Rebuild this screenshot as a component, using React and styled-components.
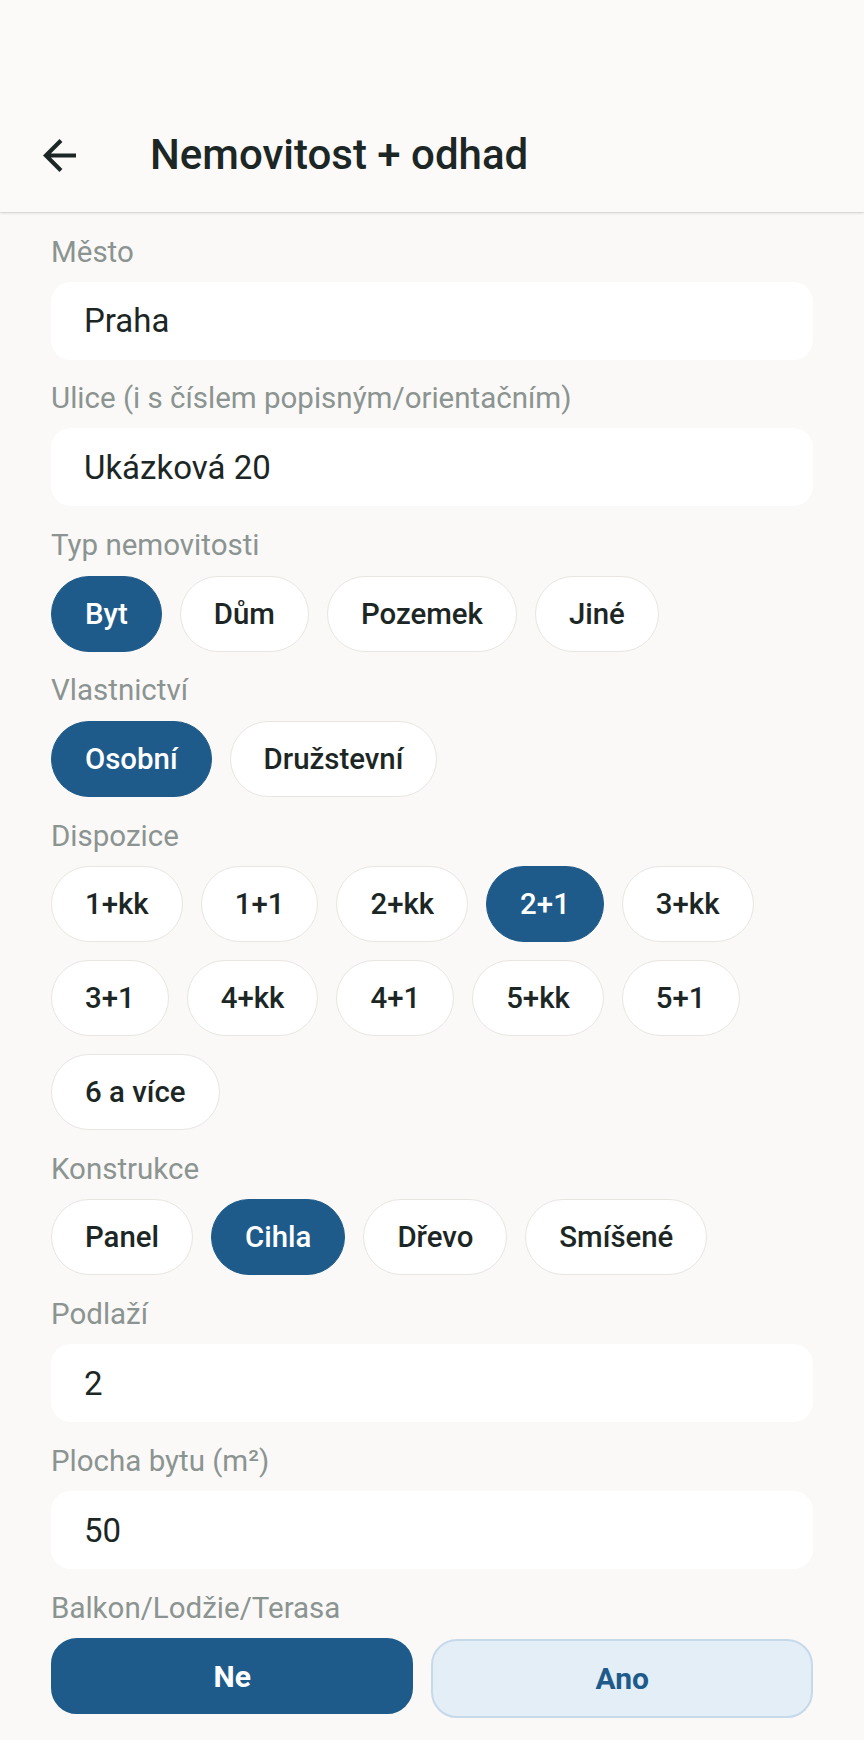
import React from "react";
import styled, { createGlobalStyle } from "styled-components";

const GlobalStyle = createGlobalStyle`
  html, body {
    margin: 0;
    padding: 0;
    background: #faf9f7;
  }
  body {
    font-family: Roboto, "Noto Sans", "Liberation Sans", sans-serif;
    color: #1c2725;
  }
`;

const Page = styled.div`
  min-height: 1740px;
  background: #faf9f7;
`;

const Header = styled.header`
  height: 212px;
  box-sizing: border-box;
  padding: 98px 0 0 43px;
  display: flex;
  align-items: center;
  background: #fbfaf8;
  box-shadow: 0 1px 3px rgba(0, 0, 0, 0.12), 0 1px 1px rgba(0, 0, 0, 0.05);
  position: relative;
  z-index: 1;
`;

const HeaderRow = styled.div`
  height: 114px;
  display: flex;
  align-items: center;
  gap: 74px;
`;

const BackButton = styled.button`
  border: 0;
  padding: 0;
  background: transparent;
  display: flex;
  color: #1c2725;
`;

const Title = styled.h1`
  margin: 0;
  font-size: 42px;
  font-weight: 500;
  line-height: 50px;
  color: #1c2725;
`;

const Content = styled.main`
  padding: 21.5px 51px 24px 51px;
  display: flex;
  flex-direction: column;
  gap: 20.8px;
`;

const Field = styled.section`
  display: flex;
  flex-direction: column;
  gap: ${(p) => (p.$chips ? "12.6px" : "12px")};
`;

const Label = styled.div`
  font-size: 29.5px;
  line-height: 36px;
  color: #8b9491;
`;

const InputBox = styled.div`
  height: 78px;
  border-radius: 20px;
  background: #ffffff;
  display: flex;
  align-items: center;
  padding-left: 33px;
  font-size: 33px;
  color: #1c2725;
`;

const ChipRow = styled.div`
  display: flex;
  flex-wrap: wrap;
  gap: 17.8px 18px;
`;

const Chip = styled.button`
  height: 76px;
  box-sizing: border-box;
  padding: 0 33px;
  border-radius: 38px;
  border: 1px solid ${(p) => (p.$active ? "#1e5b8b" : "#e9e6e1")};
  background: ${(p) => (p.$active ? "#1e5b8b" : "#ffffff")};
  color: ${(p) => (p.$active ? "#ffffff" : "#1c2725")};
  font-family: Roboto, sans-serif;
  font-size: 29.4px;
  font-weight: 500;
  display: flex;
  align-items: center;
`;

const ToggleRow = styled.div`
  display: flex;
  align-items: flex-start;
  gap: 18px;
`;

const Toggle = styled.button`
  flex: ${(p) => (p.$active ? 362 : 382)} 1 0;
  height: ${(p) => (p.$active ? "76px" : "79px")};
  margin-top: ${(p) => (p.$active ? "0" : "1px")};
  box-sizing: border-box;
  border-radius: 26px;
  border: 2px solid ${(p) => (p.$active ? "#1e5b8b" : "#c6d9ea")};
  background: ${(p) => (p.$active ? "#1e5b8b" : "#e3eef6")};
  color: ${(p) => (p.$active ? "#ffffff" : "#1e5b8b")};
  font-family: Roboto, sans-serif;
  font-size: 30px;
  font-weight: 700;
`;

const ArrowBack = () => (
  <svg width="33" height="33" viewBox="4 4 16 16" fill="currentColor">
    <path d="M20 11H7.83l5.59-5.59L12 4l-8 8 8 8 1.41-1.41L7.83 13H20v-2z" />
  </svg>
);

const ChipField = ({ label, options, value }) => (
  <Field $chips>
    <Label>{label}</Label>
    <ChipRow>
      {options.map((o) => (
        <Chip key={o} $active={o === value}>
          {o}
        </Chip>
      ))}
    </ChipRow>
  </Field>
);

const InputField = ({ label, value }) => (
  <Field>
    <Label>{label}</Label>
    <InputBox>{value}</InputBox>
  </Field>
);

export default function App() {
  return (
    <Page>
      <GlobalStyle />
      <Header>
        <HeaderRow>
          <BackButton aria-label="Zpět">
            <ArrowBack />
          </BackButton>
          <Title>Nemovitost + odhad</Title>
        </HeaderRow>
      </Header>
      <Content>
        <InputField label="Město" value="Praha" />
        <InputField label="Ulice (i s číslem popisným/orientačním)" value="Ukázková 20" />
        <ChipField label="Typ nemovitosti" options={["Byt", "Dům", "Pozemek", "Jiné"]} value="Byt" />
        <ChipField label="Vlastnictví" options={["Osobní", "Družstevní"]} value="Osobní" />
        <ChipField
          label="Dispozice"
          options={["1+kk", "1+1", "2+kk", "2+1", "3+kk", "3+1", "4+kk", "4+1", "5+kk", "5+1", "6 a více"]}
          value="2+1"
        />
        <ChipField label="Konstrukce" options={["Panel", "Cihla", "Dřevo", "Smíšené"]} value="Cihla" />
        <InputField label="Podlaží" value="2" />
        <InputField label="Plocha bytu (m²)" value="50" />
        <Field $chips>
          <Label>Balkon/Lodžie/Terasa</Label>
          <ToggleRow>
            <Toggle $active>Ne</Toggle>
            <Toggle>Ano</Toggle>
          </ToggleRow>
        </Field>
      </Content>
    </Page>
  );
}
